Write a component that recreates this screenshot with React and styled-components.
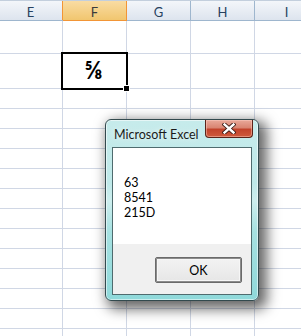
import React from "react";
import styled, { createGlobalStyle } from "styled-components";

const Global = createGlobalStyle`
  html, body { margin: 0; padding: 0; background: #fff; }
  body { font-family: Lato, "Liberation Sans", Arial, sans-serif; }
  #root { width: 301px; height: 336px; }
`;

const Screen = styled.div`
  position: relative;
  width: 301px;
  height: 336px;
  overflow: hidden;
  background: #fff;
`;

const Sheet = styled.div`
  display: flex;
  flex-direction: column;
  margin-left: -1px;
  width: 340px;
`;

const HeaderRow = styled.div`
  display: flex;
  height: 21px;
  box-sizing: border-box;
  border-top: 1px solid #c3cfdd;
  border-bottom: 1px solid #9eb6ce;
`;

const ColHead = styled.div`
  width: 64px;
  flex: none;
  box-sizing: border-box;
  display: flex;
  align-items: center;
  justify-content: center;
  padding-top: 2px;
  font-family: Lato, "Liberation Sans", Arial, sans-serif;
  font-size: 13px;
  color: ${(p) => (p.$active ? "#3b3b3b" : "#27415f")};
  background: ${(p) =>
    p.$active
      ? "linear-gradient(#f9dca3, #f1c66f)"
      : "linear-gradient(#f3f6fa, #dde4ee)"};
  border-right: 1px solid ${(p) => (p.$active ? "#f29536" : "#9eb6ce")};
  box-shadow: ${(p) => (p.$active ? "-1px 0 0 #f29536, 0 1px 0 #f29536" : "none")};
`;

const Row = styled.div`
  display: flex;
  height: ${(p) => p.$h}px;
  box-sizing: border-box;
  border-bottom: 1px solid #d0d7e5;
`;

const Cell = styled.div`
  width: 64px;
  flex: none;
  box-sizing: border-box;
  border-right: 1px solid #d0d7e5;
  display: flex;
  align-items: center;
  justify-content: center;
`;

const Fraction = styled.span`
  font-family: Lato, "DejaVu Sans", sans-serif;
  font-weight: bold;
  font-size: 24px;
  color: #000;
  line-height: 1;
  position: relative;
  top: -1px;
  left: -1px;
`;

const Selection = styled.div`
  position: absolute;
  left: 61px;
  top: 52px;
  width: 67px;
  height: 38px;
  box-sizing: border-box;
  border: 2px solid #000;
  pointer-events: none;
`;

const FillHandle = styled.div`
  position: absolute;
  right: -4px;
  bottom: -4px;
  width: 5px;
  height: 5px;
  background: #000;
  border: 1px solid #fff;
`;

const Window = styled.div`
  position: absolute;
  left: 105px;
  top: 119px;
  width: 154px;
  height: 182px;
  box-sizing: border-box;
  border: 1px solid #334a4e;
  border-radius: 6px;
  background: linear-gradient(
    #c6ebeb 0%,
    #bfe9e9 35%,
    #cdeeee 45%,
    #a6e1e1 62%,
    #8fd9da 100%
  );
  box-shadow: inset 0 0 0 1px rgba(255, 255, 255, 0.55),
    5px 5px 13px 3px rgba(0, 0, 0, 0.6);
  display: flex;
  flex-direction: column;
  padding: 0 6px 5px 6px;
`;

const TitleBar = styled.div`
  height: 27px;
  flex: none;
  display: flex;
  align-items: flex-start;
  justify-content: space-between;
`;

const Title = styled.span`
  font-family: Lato, "Liberation Sans", Arial, sans-serif;
  font-size: 12.5px;
  white-space: nowrap;
  color: #1a1a1a;
  padding-top: 7px;
  padding-left: 2px;
  text-shadow: 0 0 6px rgba(255, 255, 255, 0.9);
`;

const CloseButton = styled.div`
  width: 48px;
  height: 18px;
  flex: none;
  box-sizing: border-box;
  margin-right: -1px;
  border: 1px solid #5b2318;
  border-top: none;
  border-radius: 0 0 4px 4px;
  background: linear-gradient(#e9a99a 0%, #d98572 45%, #c2432b 55%, #cf5a3c 100%);
  box-shadow: inset 0 0 0 1px rgba(255, 210, 200, 0.45);
  display: flex;
  align-items: center;
  justify-content: center;
`;

const Content = styled.div`
  flex: 1;
  display: flex;
  flex-direction: column;
  border: 1px solid #4f6b6e;
  background: #fff;
`;

const Message = styled.div`
  height: 96px;
  box-sizing: border-box;
  padding: 27px 0 0 11px;
  font-family: Lato, "Liberation Sans", Arial, sans-serif;
  font-size: 12.5px;
  line-height: 15px;
  color: #000;
`;

const Footer = styled.div`
  flex: 1;
  background: #f0f0f0;
  display: flex;
  justify-content: flex-end;
  align-items: flex-start;
  padding: 13px 9px 0 0;
`;

const OkButton = styled.div`
  width: 87px;
  height: 26px;
  box-sizing: border-box;
  border: 1px solid #6a6a6a;
  border-radius: 2px;
  box-shadow: inset 0 0 0 1px #8c8c8c, inset 0 0 0 2px #f6f6f6;
  background: linear-gradient(#f3f3f3, #e6e6e6);
  display: flex;
  align-items: center;
  justify-content: center;
  font-family: Lato, "Liberation Sans", Arial, sans-serif;
  font-size: 12.5px;
  color: #000;
`;

const cols = ["E", "F", "G", "H", "I"];
const rowHeights = [33, 35, 20, 20, 20, 20, 20, 20, 20, 20, 20, 20, 20, 20, 20];

export default function App() {
  return (
    <Screen>
      <Global />
      <Sheet>
        <HeaderRow>
          {cols.map((c) => (
            <ColHead key={c} $active={c === "F"}>
              {c}
            </ColHead>
          ))}
        </HeaderRow>
        {rowHeights.map((h, i) => (
          <Row key={i} $h={h}>
            {cols.map((c) => (
              <Cell key={c}>
                {i === 1 && c === "F" ? <Fraction>⅝</Fraction> : null}
              </Cell>
            ))}
          </Row>
        ))}
      </Sheet>
      <Selection>
        <FillHandle />
      </Selection>
      <Window>
        <TitleBar>
          <Title>Microsoft Excel</Title>
          <CloseButton>
            <svg width="14" height="11" viewBox="0 0 14 11">
              <path
                d="M2.5 1.5 L11.5 9.5 M11.5 1.5 L2.5 9.5"
                stroke="#3a1a14"
                strokeWidth="4.2"
                strokeLinecap="square"
                fill="none"
              />
              <path
                d="M2.5 1.5 L11.5 9.5 M11.5 1.5 L2.5 9.5"
                stroke="#ffffff"
                strokeWidth="2.4"
                strokeLinecap="square"
                fill="none"
              />
            </svg>
          </CloseButton>
        </TitleBar>
        <Content>
          <Message>
            63
            <br />
            8541
            <br />
            215D
          </Message>
          <Footer>
            <OkButton>OK</OkButton>
          </Footer>
        </Content>
      </Window>
    </Screen>
  );
}
